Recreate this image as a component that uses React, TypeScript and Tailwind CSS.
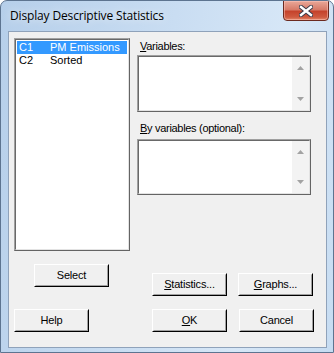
import React from "react";

const dlgFont = { fontFamily: '"Liberation Sans", Arial, sans-serif' };

function Btn({ children, className = "" }: { children: React.ReactNode; className?: string }) {
  return (
    <div
      className={
        "h-[23px] w-[75px] border border-t-white border-l-white border-r-black border-b-black bg-[#f0f0f0] " +
        className
      }
    >
      <div className="flex h-full w-full items-center justify-center border border-t-[#f0f0f0] border-l-[#f0f0f0] border-r-[#a0a0a0] border-b-[#a0a0a0] text-[11px] tracking-[-0.2px] text-black">
        {children}
      </div>
    </div>
  );
}

function Sunken({ className = "", children }: { className?: string; children?: React.ReactNode }) {
  return (
    <div className={"border border-t-[#a0a0a0] border-l-[#a0a0a0] border-r-[#646464] border-b-[#646464] " + className}>
      <div className="h-full w-full border border-t-[#696969] border-l-[#696969] border-r-[#e3e3e3] border-b-[#e3e3e3] bg-white">
        {children}
      </div>
    </div>
  );
}

function ScrollBox({ className = "" }: { className?: string }) {
  return (
    <Sunken className={className}>
      <div className="flex h-full w-full justify-end">
        <div className="flex h-full w-[17px] flex-col items-center justify-between bg-[#f3f3f3] py-[9px]">
          <svg width="7" height="4" viewBox="0 0 7 4">
            <path d="M0 4 L3.5 0 L7 4 Z" fill="#a3a3a3" />
          </svg>
          <svg width="7" height="4" viewBox="0 0 7 4">
            <path d="M0 0 L3.5 4 L7 0 Z" fill="#a3a3a3" />
          </svg>
        </div>
      </div>
    </Sunken>
  );
}

export default function App() {
  return (
    <div
      className="relative h-[353px] w-[334px] overflow-hidden rounded-t-[7px] border border-[#5d7490] bg-[linear-gradient(100deg,#b6cfea_0%,#c9ddf2_45%,#d7e7f7_75%,#c6dcf2_100%)]"
      style={dlgFont}
    >
      {/* Title bar */}
      <div className="relative flex h-[30px] items-center pl-[9px]">
        <span
          className="text-[12px] text-black"
          style={{ fontFamily: '"Open Sans", "Noto Sans", sans-serif', letterSpacing: "-0.15px", textShadow: "0 0 8px rgba(255,255,255,0.9)" }}
        >
          Display Descriptive Statistics
        </span>
        <div className="absolute right-[4px] top-[-1px] flex h-[21px] w-[46px] items-center justify-center rounded-b-[4px] border border-[#6b2a20] bg-[linear-gradient(180deg,#e9a899_0%,#d77b69_45%,#c5432c_55%,#cf5a40_85%,#e38a6c_100%)] shadow-[inset_0_0_0_1px_rgba(255,200,190,0.5)]">
          <svg width="14" height="12" viewBox="0 0 14 12">
            <path d="M2 2 L12 10 M12 2 L2 10" stroke="#3a3a4a" strokeWidth="4.4" strokeLinecap="square" />
            <path d="M2 2 L12 10 M12 2 L2 10" stroke="#ffffff" strokeWidth="2.4" strokeLinecap="square" />
          </svg>
        </div>
      </div>

      {/* Client area */}
      <div className="ml-[7px] mr-[6px] h-[317px] border border-[#8fa2ba] bg-[#f0f0f0]">
        {/* top section */}
        <div className="flex pl-[5px] pt-[6px]">
          <Sunken className="h-[213px] w-[116px]">
            <div className="pt-[1px] text-[11px] leading-[13px]">
              <div className="mx-[1px] flex bg-[#3399ff] text-white">
                <span className="w-[33px] pl-[2px]">C1</span>
                <span>PM Emissions</span>
              </div>
              <div className="mx-[1px] flex text-black">
                <span className="w-[33px] pl-[2px]">C2</span>
                <span>Sorted</span>
              </div>
            </div>
          </Sunken>
          <div className="ml-[7px] flex w-[174px] flex-col">
            <div className="mb-[2px] mt-[2px] pl-[3px] text-[11px] leading-[13px] tracking-[-0.3px] text-black">
              <span className="underline underline-offset-[1px]">V</span>ariables:
            </div>
            <ScrollBox className="h-[57px]" />
            <div className="mb-[4px] mt-[10px] pl-[3px] text-[11px] leading-[13px] tracking-[-0.3px] text-black">
              <span className="underline underline-offset-[1px]">B</span>y variables (optional):
            </div>
            <ScrollBox className="h-[56px]" />
          </div>
        </div>

        {/* button row 1 */}
        <div className="flex pl-[5px]">
          <div className="flex w-[116px] justify-center pr-[1px] pt-[13px]">
            <Btn>Select</Btn>
          </div>
          <div className="ml-[22px] flex gap-[11px] pt-[22px]">
            <Btn>
              <span className="underline underline-offset-[1px]">S</span>tatistics...
            </Btn>
            <Btn>
              <span className="underline underline-offset-[1px]">G</span>raphs...
            </Btn>
          </div>
        </div>

        {/* button row 2 */}
        <div className="mt-[13px] flex pl-[5px]">
          <Btn>Help</Btn>
          <Btn className="ml-[63px]">
            <span className="underline underline-offset-[1px]">O</span>K
          </Btn>
          <Btn className="ml-[12px]">Cancel</Btn>
        </div>
      </div>
    </div>
  );
}
